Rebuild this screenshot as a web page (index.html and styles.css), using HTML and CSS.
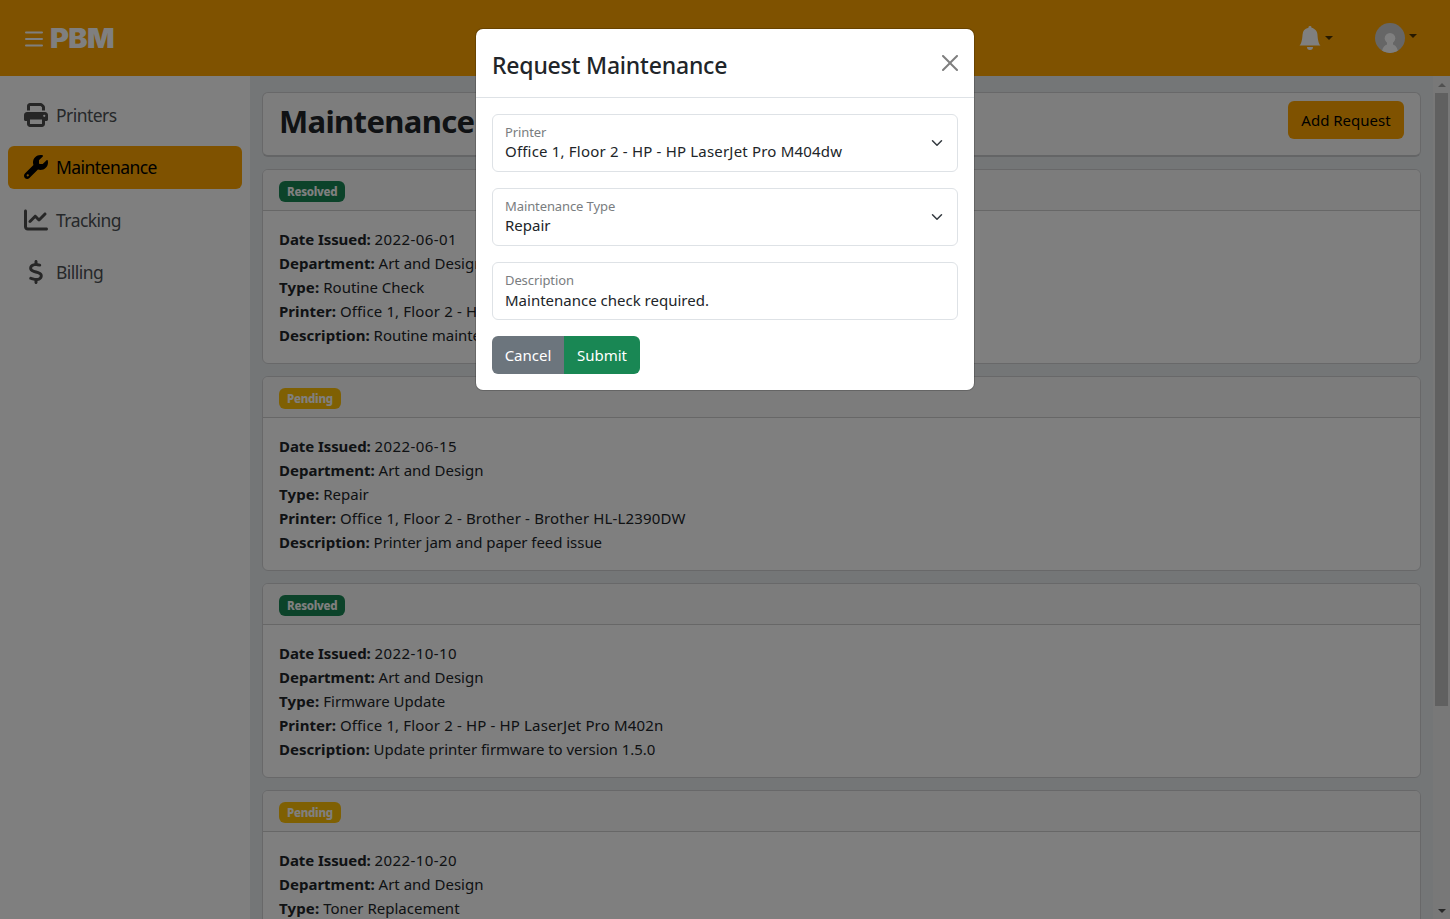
FILE: index.html
```
<!DOCTYPE html>
<html lang="en">
<head>
<meta charset="utf-8">
<title>PBM - Maintenance</title>
<link rel="stylesheet" href="styles.css">
</head>
<body>
<header class="navbar">
  <div class="brand">
    <svg class="menu-icon" viewBox="0 0 18 16"><path d="M1 1.500h16M1 8h16M1 14.500h16" stroke="#fff" stroke-width="2" stroke-linecap="round"/></svg>
    <span class="logo">PBM</span>
  </div>
  <div class="nav-right">
    <div class="bell">
      <svg viewBox="0 0 16 16" width="24" height="24" fill="#fff"><path d="M8 16a2 2 0 0 0 2-2H6a2 2 0 0 0 2 2zm.995-14.901a1 1 0 1 0-1.99 0A5.002 5.002 0 0 0 3 6c0 1.098-.5 6-2 7h14c-1.5-1-2-5.902-2-7 0-2.42-1.72-4.44-4.005-4.901z"/></svg>
      <i class="caret"></i>
    </div>
    <div class="user">
      <svg viewBox="0 0 30 30" width="30" height="30"><defs><clipPath id="c"><circle cx="15" cy="15" r="15"/></clipPath></defs><g clip-path="url(#c)"><rect width="30" height="30" fill="#ccc"/><circle cx="15" cy="15.300" r="5.300" fill="#fff"/><path d="M12 18h6v3.500c2.800.8 4.700 3.500 5.200 8.500H6.800c.5-5 2.400-7.700 5.200-8.500z" fill="#fff"/></g></svg>
      <i class="caret"></i>
    </div>
  </div>
</header>
<div class="layout">
  <nav class="sidebar">
    <a class="item"><svg viewBox="0 0 512 512"><path d="M128 0C92.700 0 64 28.700 64 64v96h64V64H354.700L384 93.300V160h64V93.300c0-17-6.700-33.300-18.700-45.300L400 18.700C388 6.700 371.700 0 354.700 0H128zM384 352v32 64H128V384 368 352H384zm64 32h32c17.700 0 32-14.300 32-32V256c0-35.300-28.700-64-64-64H64c-35.300 0-64 28.700-64 64v96c0 17.700 14.300 32 32 32H64v64c0 35.300 28.700 64 64 64H384c35.300 0 64-28.700 64-64V384zM432 248a24 24 0 1 1 0 48 24 24 0 1 1 0-48z"/></svg><span>Printers</span></a>
    <a class="item active"><svg viewBox="0 0 512 512"><path d="M352 320c88.400 0 160-71.600 160-160c0-15.300-2.200-30.100-6.200-44.200c-3.100-10.800-16.400-13.200-24.300-5.300l-76.800 76.800c-3 3-7.100 4.700-11.300 4.700H336c-8.800 0-16-7.200-16-16V118.600c0-4.200 1.700-8.300 4.700-11.300l76.800-76.800c7.900-7.900 5.400-21.200-5.300-24.300C382.100 2.200 367.300 0 352 0C263.600 0 192 71.600 192 160c0 19.100 3.400 37.500 9.500 54.500L19.900 396.100C7.200 408.800 0 426.100 0 444.100C0 481.600 30.400 512 67.900 512c18 0 35.300-7.200 48-19.900L297.500 310.500c17 6.200 35.400 9.500 54.500 9.500zM80 408a24 24 0 1 1 0 48 24 24 0 1 1 0-48z"/></svg><span>Maintenance</span></a>
    <a class="item"><svg viewBox="0 0 512 512"><path d="M64 64c0-17.700-14.300-32-32-32S0 46.300 0 64V400c0 44.200 35.800 80 80 80H480c17.700 0 32-14.300 32-32s-14.300-32-32-32H80c-8.800 0-16-7.200-16-16V64zm406.600 86.600c12.500-12.500 12.500-32.800 0-45.300s-32.800-12.500-45.300 0L320 210.700l-57.400-57.400c-12.500-12.500-32.800-12.500-45.300 0l-112 112c-12.500 12.500-12.500 32.800 0 45.300s32.800 12.500 45.300 0L240 221.300l57.400 57.400c12.500 12.500 32.800 12.500 45.300 0l128-128z"/></svg><span>Tracking</span></a>
    <a class="item"><svg viewBox="-96 0 512 512"><path d="M160 0c17.700 0 32 14.300 32 32V67.700c1.600 .2 3.100 .4 4.700 .7c.4 .1 .7 .1 1.100 .2l48 8.800c17.400 3.200 28.900 19.900 25.700 37.200s-19.900 28.900-37.200 25.700l-47.500-8.700c-31.300-4.600-58.900-1.500-78.300 6.200s-27.200 18.300-29 28.100c-2 10.700-.5 16.700 1.200 20.400c1.800 3.900 5.500 8.300 12.800 13.200c16.300 10.700 41.300 17.700 73.700 26.300l2.900 .8c28.600 7.600 63.600 16.800 89.600 33.800c14.200 9.300 27.600 21.900 35.900 39.500c8.500 17.900 10.300 37.900 6.400 59.200c-6.900 38-33.100 63.400-65.600 76.700c-13.700 5.600-28.600 9.200-44.400 11V480c0 17.700-14.300 32-32 32s-32-14.300-32-32V445.100c-.4-.1-.9-.1-1.300-.2l-.2 0c-24.400-3.800-64.500-14.300-91.500-26.300c-16.100-7.200-23.400-26.100-16.200-42.200s26.100-23.400 42.200-16.200c20.900 9.300 55.300 18.500 75.200 21.600c31.900 4.700 58.200 2 76-5.300c16.900-6.900 24.600-16.900 26.800-28.900c1.900-10.600 .4-16.700-1.300-20.400c-1.900-4-5.600-8.400-13-13.300c-16.400-10.700-41.500-17.700-74-26.300l-2.800-.7C119.400 279.300 84.400 270 58.400 253c-14.200-9.300-27.500-22-35.800-39.600c-8.400-17.900-10.100-37.900-6.100-59.200C23.700 116 52.300 91.200 84.800 78.300c13.300-5.300 27.900-8.900 43.200-11V32c0-17.700 14.300-32 32-32z"/></svg><span>Billing</span></a>
  </nav>
  <main class="content">
    <section class="title-card"><h1>Maintenance</h1><button class="btn add">Add Request</button></section>
    <article class="card">
      <div class="card-head"><span class="badge resolved">Resolved</span></div>
      <div class="card-body">
        <p><b class="k-date">Date Issued:</b> <span class="date">2022-06-01</span></p>
        <p><b class="k-dept">Department:</b> <span>Art and Design</span></p>
        <p><b class="k-type">Type:</b> <span>Routine Check</span></p>
        <p><b class="k-print">Printer:</b> <span class="printer">Office 1, Floor 2 - HP</span></p>
        <p><b class="k-desc">Description:</b> <span class="note">Routine maintenance</span></p>
      </div>
    </article>
    <article class="card">
      <div class="card-head"><span class="badge pending">Pending</span></div>
      <div class="card-body">
        <p><b class="k-date">Date Issued:</b> <span class="date">2022-06-15</span></p>
        <p><b class="k-dept">Department:</b> <span>Art and Design</span></p>
        <p><b class="k-type">Type:</b> <span>Repair</span></p>
        <p><b class="k-print">Printer:</b> <span class="printer">Office 1, Floor 2 - Brother - Brother HL-L2390DW</span></p>
        <p><b class="k-desc">Description:</b> <span class="note">Printer jam and paper feed issue</span></p>
      </div>
    </article>
    <article class="card">
      <div class="card-head"><span class="badge resolved">Resolved</span></div>
      <div class="card-body">
        <p><b class="k-date">Date Issued:</b> <span class="date">2022-10-10</span></p>
        <p><b class="k-dept">Department:</b> <span>Art and Design</span></p>
        <p><b class="k-type">Type:</b> <span>Firmware Update</span></p>
        <p><b class="k-print">Printer:</b> <span class="printer">Office 1, Floor 2 - HP - HP LaserJet Pro M402n</span></p>
        <p><b class="k-desc">Description:</b> <span class="note">Update printer firmware to version 1.5.0</span></p>
      </div>
    </article>
    <article class="card">
      <div class="card-head"><span class="badge pending">Pending</span></div>
      <div class="card-body">
        <p><b class="k-date">Date Issued:</b> <span class="date">2022-10-20</span></p>
        <p><b class="k-dept">Department:</b> <span>Art and Design</span></p>
        <p><b class="k-type">Type:</b> <span>Toner Replacement</span></p>
      </div>
    </article>
  </main>
  <div class="scrollbar"><i class="arrow up"></i><i class="thumb"></i><i class="arrow down"></i></div>
</div>
<div class="backdrop">
  <div class="modal" role="dialog">
    <div class="modal-head"><h2>Request Maintenance</h2><svg viewBox="0 0 16 16" width="16" height="16"><path d="M.293.293a1 1 0 0 1 1.414 0L8 6.586 14.293.293a1 1 0 1 1 1.414 1.414L9.414 8l6.293 6.293a1 1 0 0 1-1.414 1.414L8 9.414l-6.293 6.293a1 1 0 0 1-1.414-1.414L6.586 8 .293 1.707a1 1 0 0 1 0-1.414z"/></svg></div>
    <div class="modal-body">
      <div class="field"><div><label>Printer</label><div class="val wide">Office 1, Floor 2 - HP - HP LaserJet Pro M404dw</div></div><svg class="chev" viewBox="0 0 16 16"><path d="m2 5 6 6 6-6"/></svg></div>
      <div class="field"><div><label>Maintenance Type</label><div class="val">Repair</div></div><svg class="chev" viewBox="0 0 16 16"><path d="m2 5 6 6 6-6"/></svg></div>
      <div class="field desc"><div><label>Description</label><div class="val">Maintenance check required.</div></div></div>
      <div class="actions"><button class="btn cancel">Cancel</button><button class="btn submit">Submit</button></div>
    </div>
  </div>
</div>
</body>
</html>
```
FILE: styles.css
```
* { box-sizing: border-box; }
body { margin: 0; height: 919px; overflow: hidden; position: relative; display: flex; flex-direction: column; font: 15px/24px "Noto Sans", "Open Sans", sans-serif; color: #212529; }
h1, h2, p { margin: 0; }
.navbar { flex: none; height: 76px; background: #ffa500; display: flex; justify-content: space-between; align-items: center; padding: 0 33px 0 25px; }
.brand { display: flex; align-items: center; }
.menu-icon { width: 18px; height: 16px; margin-top: 2px; fill: none; }
.logo { margin: 2px 0 0 7px; font: 900 27px/30px Inter, sans-serif; letter-spacing: -.6px; color: #fff; transform: scaleX(1.07); transform-origin: left; }
.nav-right { display: flex; gap: 42px; align-items: center; }
.bell, .user { display: flex; align-items: center; gap: 3px; }
.user { gap: 4px; }
.user svg, .bell svg { display: block; }
.caret { border: 4px solid transparent; border-top-color: #4d3200; border-bottom: 0; }
.user .caret { margin-bottom: 4px; }
.layout { flex: 1; min-height: 0; display: flex; background: #e9ecef; }
.sidebar { width: 250px; flex: none; background: #fff; padding: 17.300px 8px; display: flex; flex-direction: column; gap: 9.400px; }
.item { height: 43px; flex: none; display: flex; align-items: center; gap: 8px; padding: 0 16px; border-radius: 6px; font-size: 17.500px; letter-spacing: -.55px; color: #4d5154; }
.item svg { width: 24px; height: 24px; fill: #4d4d4d; }
.item.active { background: #ffa500; color: #000; }
.item.active svg { fill: #000; }
.content { flex: 1; min-width: 0; padding: 16px 12px; display: flex; flex-direction: column; gap: 12px; overflow: hidden; }
.title-card { flex: none; height: 65px; background: #fbfbfb; border: 1px solid #d0d1d3; border-bottom: 2px solid #c9cacc; border-radius: 6px; padding: 8px 16px 0; display: flex; justify-content: space-between; align-items: flex-start; }
h1 { font-size: 31px; line-height: 40px; font-weight: 700; letter-spacing: -.65px; }
.card { flex: none; height: 195px; background: #fff; border: 1px solid #d0d1d3; border-radius: 6px; }
.card-head { height: 41px; padding: 11px 16px; background: #f8f8f8; border-bottom: 1px solid #cfcfcf; border-radius: 5px 5px 0 0; display: flex; }
.badge { height: 21px; padding: 0 8px; border-radius: 6px; color: #fff; font-weight: 800; font-size: 11.500px; line-height: 21px; letter-spacing: -.25px; }
.resolved { background: #198754; width: 66px; }
.pending { background: #ffc107; width: 62px; }
.card-body { padding: 16px; }
.card-body p { white-space: nowrap; }
.card-body .date { letter-spacing: .4px; }
.card-body .printer { letter-spacing: .15px; }
.card-body .note { letter-spacing: -.05px; }
.k-date { letter-spacing: -.08px; }
.k-dept { letter-spacing: 0; }
.k-type { letter-spacing: .15px; }
.k-print, .k-desc { letter-spacing: .04px; }
.btn { height: 38px; border: 0; padding: 0 12.500px; font: inherit; border-radius: 6px; white-space: nowrap; }
.add { background: #ffa500; color: #000; width: 116px; }
.scrollbar { width: 17px; flex: none; background: #f1f1f1; display: flex; flex-direction: column; align-items: center; padding: 7px 2px 6px; }
.arrow { border: 4px solid transparent; flex: none; }
.up { border-bottom-color: #a3a3a3; border-top: 0; }
.down { border-top-color: #505050; border-bottom: 0; margin-top: auto; }
.thumb { width: 13px; height: 613px; margin-top: 6px; background: #c1c1c1; }
.backdrop { position: absolute; inset: 0; background: rgba(0,0,0,.5); display: flex; justify-content: center; align-items: flex-start; padding-top: 29px; }
.modal { width: 498px; height: 361px; background: #fff; border-radius: 7px; box-shadow: 0 0 0 1px rgba(0,0,0,.18); }
.modal-head { height: 69px; border-bottom: 1px solid #dee2e6; padding: 0 16px; display: flex; align-items: center; justify-content: space-between; }
.modal-head svg { fill: #7f7f7f; }
h2 { font-size: 23px; line-height: 36px; font-weight: 500; letter-spacing: -.2px; padding-top: 3px; }
.modal-body { padding: 16px; display: flex; flex-direction: column; gap: 16px; }
.field { height: 58px; border: 1px solid #dee2e6; border-radius: 6px; padding: 7px 12px 0; display: flex; justify-content: space-between; }
.field label { display: block; font-size: 13px; line-height: 20px; letter-spacing: -.1px; color: #7a7d80; }
.val { line-height: 18px; white-space: nowrap; }
.wide { letter-spacing: .19px; }
.desc .val { line-height: 20px; }
.chev { width: 12px; height: 12px; margin: 15px 2px 0; fill: none; stroke: #343a40; stroke-width: 2; stroke-linecap: round; stroke-linejoin: round; }
.actions { display: flex; }
.cancel { width: 72px; background: #6c757d; color: #fff; border-radius: 6px 0 0 6px; }
.submit { width: 76px; background: #198754; color: #fff; border-radius: 0 6px 6px 0; }
```
